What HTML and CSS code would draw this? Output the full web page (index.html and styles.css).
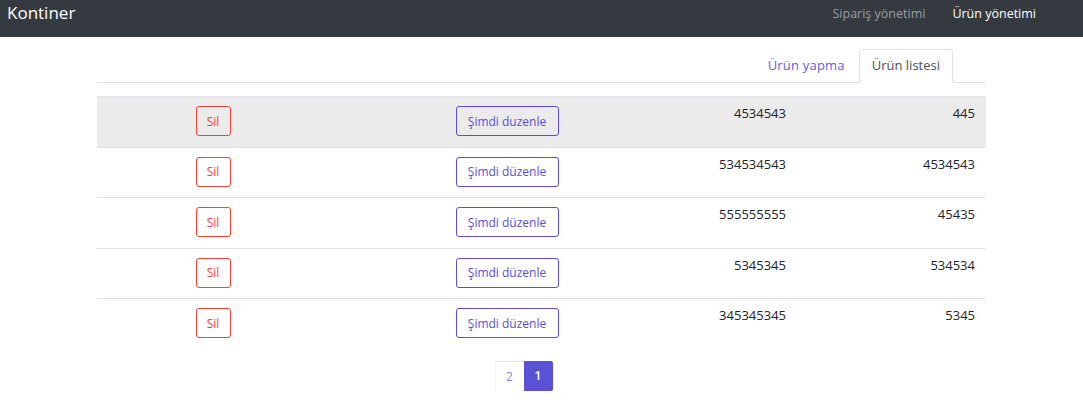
FILE: index.html
```html
<!DOCTYPE html>
<html lang="tr">
<head>
<meta charset="utf-8">
<link rel="stylesheet" href="styles.css">
</head>
<body>
<nav class="navbar">
  <span class="brand">Kontiner</span>
  <div class="nav-links">
    <a class="nav-link">Sipariş yönetimi</a>
    <a class="nav-link active">Ürün yönetimi</a>
  </div>
</nav>
<main class="container">
  <div class="tabs">
    <a class="tab wide">Ürün yapma</a>
    <a class="tab active">Ürün listesi</a>
  </div>
  <div class="table">
    <div class="row striped">
      <div class="cell c1"><button class="btn btn-del">Sil</button></div>
      <div class="cell c2"><button class="btn btn-edit">Şimdi duzenle</button></div>
      <div class="cell c3">4534543</div>
      <div class="cell c4">445</div>
    </div>
    <div class="row">
      <div class="cell c1"><button class="btn btn-del">Sil</button></div>
      <div class="cell c2"><button class="btn btn-edit">Şimdi düzenle</button></div>
      <div class="cell c3">534534543</div>
      <div class="cell c4">4534543</div>
    </div>
    <div class="row">
      <div class="cell c1"><button class="btn btn-del">Sil</button></div>
      <div class="cell c2"><button class="btn btn-edit">Şimdi düzenle</button></div>
      <div class="cell c3">555555555</div>
      <div class="cell c4">45435</div>
    </div>
    <div class="row">
      <div class="cell c1"><button class="btn btn-del">Sil</button></div>
      <div class="cell c2"><button class="btn btn-edit">Şimdi düzenle</button></div>
      <div class="cell c3">5345345</div>
      <div class="cell c4">534534</div>
    </div>
    <div class="row">
      <div class="cell c1"><button class="btn btn-del">Sil</button></div>
      <div class="cell c2"><button class="btn btn-edit">Şimdi düzenle</button></div>
      <div class="cell c3">345345345</div>
      <div class="cell c4">5345</div>
    </div>
  </div>
  <div class="pagination">
    <a class="page">2</a>
    <a class="page active">1</a>
  </div>
</main>
</body>
</html>
```

FILE: styles.css
```css
* { box-sizing: border-box; }
body {
  margin: 0;
  font-family: "Open Sans", "Noto Sans", sans-serif;
  color: #212529;
  background: #fff;
}
.navbar {
  height: 37px;
  background: #343a40;
  display: flex;
  align-items: flex-start;
  justify-content: space-between;
  padding: 2px 47px 0 7px;
}
.brand {
  color: #fff;
  font-size: 17px;
  line-height: 22px;
}
.nav-links {
  display: flex;
  gap: 27px;
  padding-top: 3px;
}
.nav-link {
  color: #9a9da1;
  font-size: 12.5px;
  line-height: 18px;
}
.nav-link.active { color: #fff; }

.container {
  width: 889px;
  margin: 0 auto;
}
.tabs {
  display: flex;
  justify-content: flex-end;
  padding: 12px 33px 0 0;
  border-bottom: 1px solid #dee2e6;
}
.tab {
  font-size: 13px;
  line-height: 17px;
  padding: 7px 12px 8px;
  color: #6a5cd8;
  border: 1px solid transparent;
  border-radius: 3px 3px 0 0;
  margin-bottom: -1px;
}
.tab.wide {
  letter-spacing: 0.2px;
  padding-right: 13px;
}
.tab.active {
  color: #495057;
  background: #fff;
  border-color: #dee2e6 #dee2e6 #fff;
}
.table {
  margin-top: 13px;
  border-top: 1px solid #dee2e6;
}
.row {
  display: grid;
  grid-template-columns: 232px 356px 112px 189px;
  border-bottom: 1px solid #dee2e6;
  height: 50.5px;
}
.row.striped { background: #ebebeb; }
.row:last-child { border-bottom: none; }
.cell {
  padding: 9px 11px 0;
  font-size: 13px;
  line-height: 16px;
}
.c1, .c2 { text-align: center; }
.c3, .c4 { text-align: right; padding-top: 8px; }
.btn {
  font-family: inherit;
  font-size: 12px;
  height: 30px;
  background: transparent;
  border-radius: 3px;
  padding: 0;
  cursor: pointer;
}
.btn-del {
  color: #f44336;
  border: 1px solid #f44336;
  width: 35px;
}
.btn-edit {
  color: #5a4fdc;
  border: 1px solid #5a4fdc;
  width: 103px;
}
.pagination {
  display: flex;
  justify-content: center;
  padding-right: 36px;
  margin-top: 11px;
}
.page {
  width: 29px;
  height: 30px;
  display: flex;
  align-items: center;
  justify-content: center;
  font-size: 12px;
  color: #8a84e0;
  border-top: 1px solid #e3e3e3;
  border-left: 1px solid #f3f3f3;
}
.page.active {
  background: #5a52d5;
  color: #fff;
  font-weight: 600;
  border: none;
  border-radius: 0 2px 2px 0;
}
```
